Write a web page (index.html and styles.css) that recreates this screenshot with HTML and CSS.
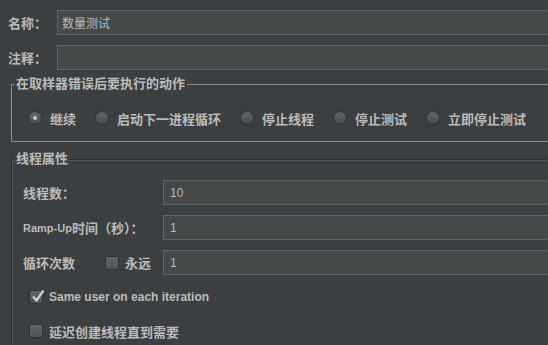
FILE: index.html
```html
<!DOCTYPE html>
<html lang="zh-CN">
<head>
  <meta charset="UTF-8" />
  <title>线程组</title>
  <link rel="stylesheet" href="styles.css">
</head>
<body>
  <div class="panel">
    <div class="row">
      <span class="lbl">名称：</span>
      <div class="field">数量测试</div>
    </div>
    <div class="row">
      <span class="lbl">注释：</span>
      <div class="field"></div>
    </div>

    <fieldset class="group on-error">
      <legend>在取样器错误后要执行的动作</legend>
      <div class="radios">
        <span class="opt"><span class="radio checked"></span>继续</span>
        <span class="opt"><span class="radio"></span>启动下一进程循环</span>
        <span class="opt"><span class="radio"></span>停止线程</span>
        <span class="opt"><span class="radio"></span>停止测试</span>
        <span class="opt"><span class="radio"></span>立即停止测试</span>
      </div>
    </fieldset>

    <fieldset class="group props">
      <legend>线程属性</legend>
      <div class="prow">
        <span class="plbl">线程数：</span>
        <div class="field num">10</div>
      </div>
      <div class="prow">
        <span class="plbl"><span class="lat">Ramp-Up</span>时间（秒）：</span>
        <div class="field num">1</div>
      </div>
      <div class="prow">
        <span class="plbl loop">
          <span class="loop-name">循环次数</span>
          <span class="check"></span>
          <span>永远</span>
        </span>
        <div class="field num">1</div>
      </div>
      <div class="crow">
        <span class="check checked">
          <svg width="16" height="16" viewBox="0 0 16 16"><path d="M3 7.5 L6.5 11.5 L13.5 1.5" fill="none" stroke="#cfd1d2" stroke-width="2.2"/></svg>
        </span>
        <span class="lat wide">Same user on each iteration</span>
      </div>
      <div class="crow">
        <span class="check"></span>
        <span>延迟创建线程直到需要</span>
      </div>
    </fieldset>
  </div>
</body>
</html>
```

FILE: styles.css
```css
html, body {
  margin: 0;
  padding: 0;
  height: 100%;
  overflow: hidden;
  background: #3c3f41;
  color: #bbbbbb;
  font-family: "Liberation Sans", "Noto Sans CJK SC", sans-serif;
  font-size: 13px;
  font-weight: bold;
}

.panel {
  width: 570px;
  padding-top: 10px;
}

.row {
  display: flex;
  align-items: center;
  height: 25px;
  margin-bottom: 10px;
  padding-left: 8px;
}

.lbl {
  width: 49px;
  flex-shrink: 0;
}

.field {
  flex: 1;
  height: 25px;
  box-sizing: border-box;
  border: 1px solid #646464;
  background: #45494a;
  font-size: 12px;
  font-weight: normal;
  padding-left: 4px;
  display: flex;
  align-items: center;
  color: #bbbbbb;
}

.field.num {
  padding-left: 6px;
}

.lat {
  font-size: 11px;
}

.lat.wide {
  font-size: 12px;
}

.group {
  margin: 0 0 0 11px;
  min-width: 0;
  width: 600px;
  box-sizing: border-box;
}

.group legend {
  padding: 0 2px;
  margin-left: -14px;
  line-height: 16px;
  height: 16px;
}

.on-error {
  margin-top: -4px;
  border: 1px solid #8e8e8e;
  padding: 19px 0 16px 16px;
}

.radios {
  display: flex;
  align-items: center;
  gap: 19px;
  height: 14px;
}

.opt {
  display: flex;
  align-items: center;
  gap: 8px;
  white-space: nowrap;
}

.radio {
  width: 14px;
  height: 14px;
  box-sizing: border-box;
  border-radius: 50%;
  border: 1px solid #2f3133;
  background: linear-gradient(#626568, #4a4d4f);
  display: flex;
  align-items: center;
  justify-content: center;
}

.radio.checked::after {
  content: "";
  width: 4px;
  height: 4px;
  border-radius: 50%;
  background: #c8c8c8;
}

.props {
  margin-top: 9px;
  border: 1px solid #2b2d2e;
  box-shadow: inset 1px 1px 0 #515456;
  padding: 13px 0 40px 11px;
}

.props legend {
  margin-left: -9px;
}

.prow {
  display: flex;
  align-items: center;
  height: 25px;
  margin-bottom: 10px;
}

.plbl {
  width: 140px;
  flex-shrink: 0;
  display: flex;
  align-items: center;
  white-space: nowrap;
}

.loop-name {
  width: 82px;
}

.loop .check {
  margin-right: 6px;
}

.check {
  width: 14px;
  height: 14px;
  box-sizing: border-box;
  border: 1px solid #2f3133;
  border-radius: 2px;
  background: linear-gradient(#626568, #505355);
  flex-shrink: 0;
  position: relative;
}

.check svg {
  position: absolute;
  left: 0;
  top: -2px;
}

.crow {
  display: flex;
  align-items: center;
  gap: 6px;
  height: 14px;
  margin: 15px 0 20px 6px;
}

.crow + .crow {
  margin-top: 0;
}
```
